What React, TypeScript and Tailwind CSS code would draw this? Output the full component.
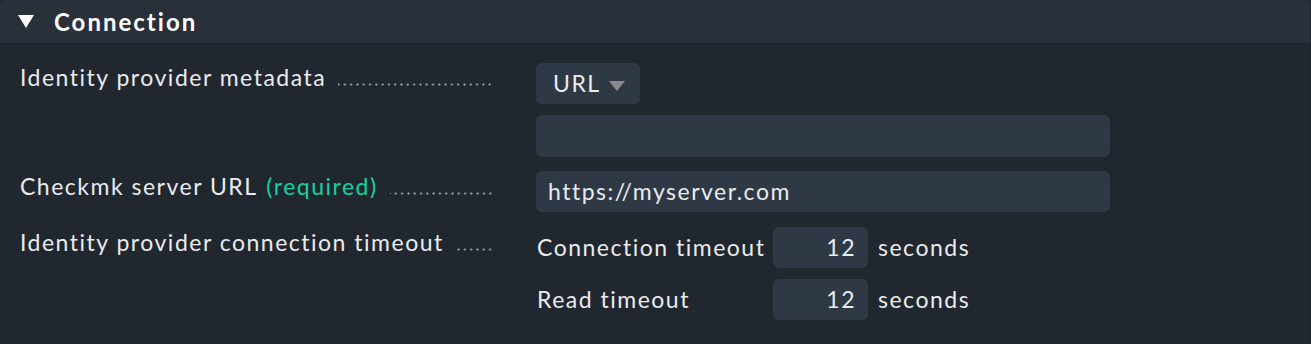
import { ReactNode } from "react";

const font = { fontFamily: "Lato, 'Noto Sans', sans-serif" };

// dotted leader between a label and its field
function Dots() {
  return (
    <div className="flex-1 ml-3 h-[3px] bg-[radial-gradient(circle,#8c9196_0.9px,transparent_1.4px)] bg-[length:6.3px_3px] bg-repeat-x bg-right" />
  );
}

function Row({ label, children, top }: { label: ReactNode; children: ReactNode; top: string }) {
  return (
    <div className={`flex ${top}`}>
      <div className="w-[536px] shrink-0 pl-5 pr-[43px] flex items-baseline leading-[30px] whitespace-nowrap">
        {label}
        <Dots />
      </div>
      <div className="flex flex-col">{children}</div>
    </div>
  );
}

function TimeoutRow({ label, value }: { label: string; value: string }) {
  return (
    <div className="flex items-center">
      <span className="w-[237px] pl-px">{label}</span>
      <div className="w-[95px] h-[41px] rounded-md bg-[#2f3945] flex items-center justify-end pr-[12px]">
        {value}
      </div>
      <span className="ml-[10px]">seconds</span>
    </div>
  );
}

export default function App() {
  return (
    <div className="w-[1311px] h-[344px] bg-[#1e242b] overflow-hidden" style={font}>
      <div className="w-[1310px] h-[344px] bg-[#21272f] rounded-t-[4px] overflow-hidden text-[23px] text-[#e9ebed] tracking-[1.5px]">
        <div className="h-[43px] bg-[#29303a] flex items-center">
          <svg className="ml-[18px]" width="16" height="13" viewBox="0 0 16 13">
            <polygon points="0,0 16,0 8,13" fill="#ffffff" />
          </svg>
          <span className="ml-5 font-bold text-[24px] tracking-[2px] text-white">Connection</span>
        </div>

        <Row label={<span className="-mt-px">Identity provider metadata</span>} top="mt-5">
          <div className="w-[104px] h-[41px] rounded-md bg-[#2f3945] flex items-center pl-[17px]">
            <span>URL</span>
            <svg className="ml-[8px] mt-[5px]" width="16" height="10" viewBox="0 0 16 10">
              <polygon points="0,0 16,0 8,10" fill="#8b8b8b" />
            </svg>
          </div>
          <div className="w-[574px] h-[42px] rounded-md bg-[#2f3945] mt-[11px]" />
        </Row>

        <Row
          label={
            <span>
              Checkmk server URL{" "}
              <span className="text-[#15d1a0] ml-[2px]">(required)</span>
            </span>
          }
          top="mt-[14px]"
        >
          <div className="w-[574px] h-[41px] rounded-md bg-[#2f3945] flex items-center pl-3">
            https://myserver.com
          </div>
        </Row>

        <Row label={<span>Identity provider connection timeout</span>} top="mt-[15px]">
          <div className="flex flex-col gap-[11px]">
            <TimeoutRow label="Connection timeout" value="12" />
            <TimeoutRow label="Read timeout" value="12" />
          </div>
        </Row>
      </div>
    </div>
  );
}
